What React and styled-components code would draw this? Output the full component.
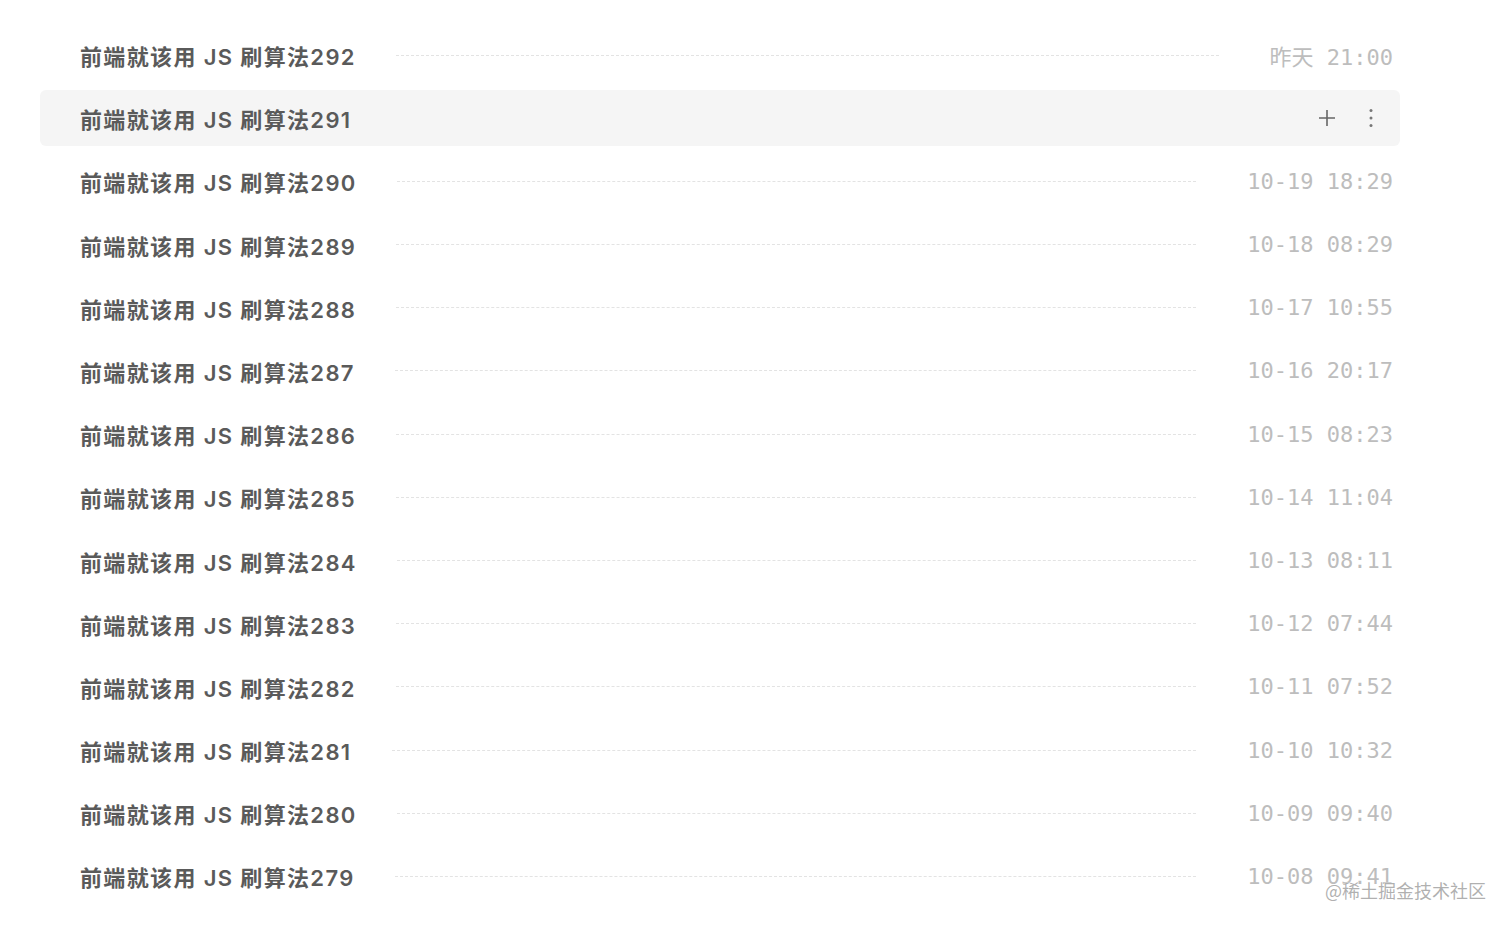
import React from "react";
import styled, { createGlobalStyle } from "styled-components";

const GlobalStyle = createGlobalStyle`
  html, body {
    margin: 0;
    padding: 0;
    background: #ffffff;
  }
  body {
    font-family: Inter, "Noto Sans CJK SC", sans-serif;
  }
`;

const Page = styled.div`
  position: relative;
  width: 1512px;
  height: 927px;
  overflow: hidden;
  background: #fff;
`;

const List = styled.ul`
  list-style: none;
  margin: 0;
  padding: 27px 0 0 40px;
  width: 1360px;
  display: flex;
  flex-direction: column;
  gap: 7.2px;
`;

const Row = styled.li`
  display: flex;
  align-items: center;
  height: 56px;
  padding: 0 7px 0 40px;
  border-radius: 6px;
  background: ${(p) => (p.$active ? "#f5f5f5" : "transparent")};
  cursor: pointer;
`;

const Title = styled.span`
  font-family: Inter, "Noto Sans CJK SC", sans-serif;
  font-size: 22px;
  font-weight: 600;
  letter-spacing: 1.35px;
  color: #5a5a5a;
  white-space: nowrap;
`;

const Dashes = styled.span`
  flex: 1;
  margin: 0 51px 0 40px;
  height: 0;
  border-top: 1px dashed #e3e3e3;
`;

const Date = styled.span`
  font-family: "DejaVu Sans Mono", "Noto Sans CJK SC", monospace;
  font-size: 22px;
  color: #bdbdbd;
  white-space: nowrap;
`;

const Spacer = styled.span`
  flex: 1;
`;

const Actions = styled.div`
  display: flex;
  align-items: center;
  gap: 26px;
  margin-right: 13px;
  color: #666;
`;

const IconBox = styled.span`
  display: flex;
  align-items: center;
  justify-content: center;
  width: 18px;
  height: 18px;
`;

const Watermark = styled.div`
  position: absolute;
  left: 1325px;
  top: 877px;
  font-family: "Noto Sans CJK SC", sans-serif;
  font-size: 18px;
  color: rgba(150, 150, 150, 0.75);
  text-shadow: 0 0 1px #fff, 0 0 1px #fff;
  white-space: nowrap;
`;

const PlusIcon = () => (
  <svg width="18" height="18" viewBox="0 0 18 18" fill="none">
    <path d="M9 1v16M1 9h16" stroke="#666" strokeWidth="1.6" />
  </svg>
);

const MoreIcon = () => (
  <svg width="18" height="18" viewBox="0 0 18 18" fill="#777">
    <circle cx="9" cy="1.5" r="1.5" />
    <circle cx="9" cy="9" r="1.5" />
    <circle cx="9" cy="16.5" r="1.5" />
  </svg>
);

const items = [
  { n: 292, date: "昨天 21:00" },
  { n: 291, active: true },
  { n: 290, date: "10-19 18:29" },
  { n: 289, date: "10-18 08:29" },
  { n: 288, date: "10-17 10:55" },
  { n: 287, date: "10-16 20:17" },
  { n: 286, date: "10-15 08:23" },
  { n: 285, date: "10-14 11:04" },
  { n: 284, date: "10-13 08:11" },
  { n: 283, date: "10-12 07:44" },
  { n: 282, date: "10-11 07:52" },
  { n: 281, date: "10-10 10:32" },
  { n: 280, date: "10-09 09:40" },
  { n: 279, date: "10-08 09:41" },
];

export default function App() {
  return (
    <Page>
      <GlobalStyle />
      <List>
        {items.map((item) => (
          <Row key={item.n} $active={item.active}>
            <Title>前端就该用 JS 刷算法{item.n}</Title>
            {item.active ? (
              <>
                <Spacer />
                <Actions>
                  <IconBox>
                    <PlusIcon />
                  </IconBox>
                  <IconBox>
                    <MoreIcon />
                  </IconBox>
                </Actions>
              </>
            ) : (
              <>
                <Dashes />
                <Date>{item.date}</Date>
              </>
            )}
          </Row>
        ))}
      </List>
      <Watermark>@稀土掘金技术社区</Watermark>
    </Page>
  );
}
